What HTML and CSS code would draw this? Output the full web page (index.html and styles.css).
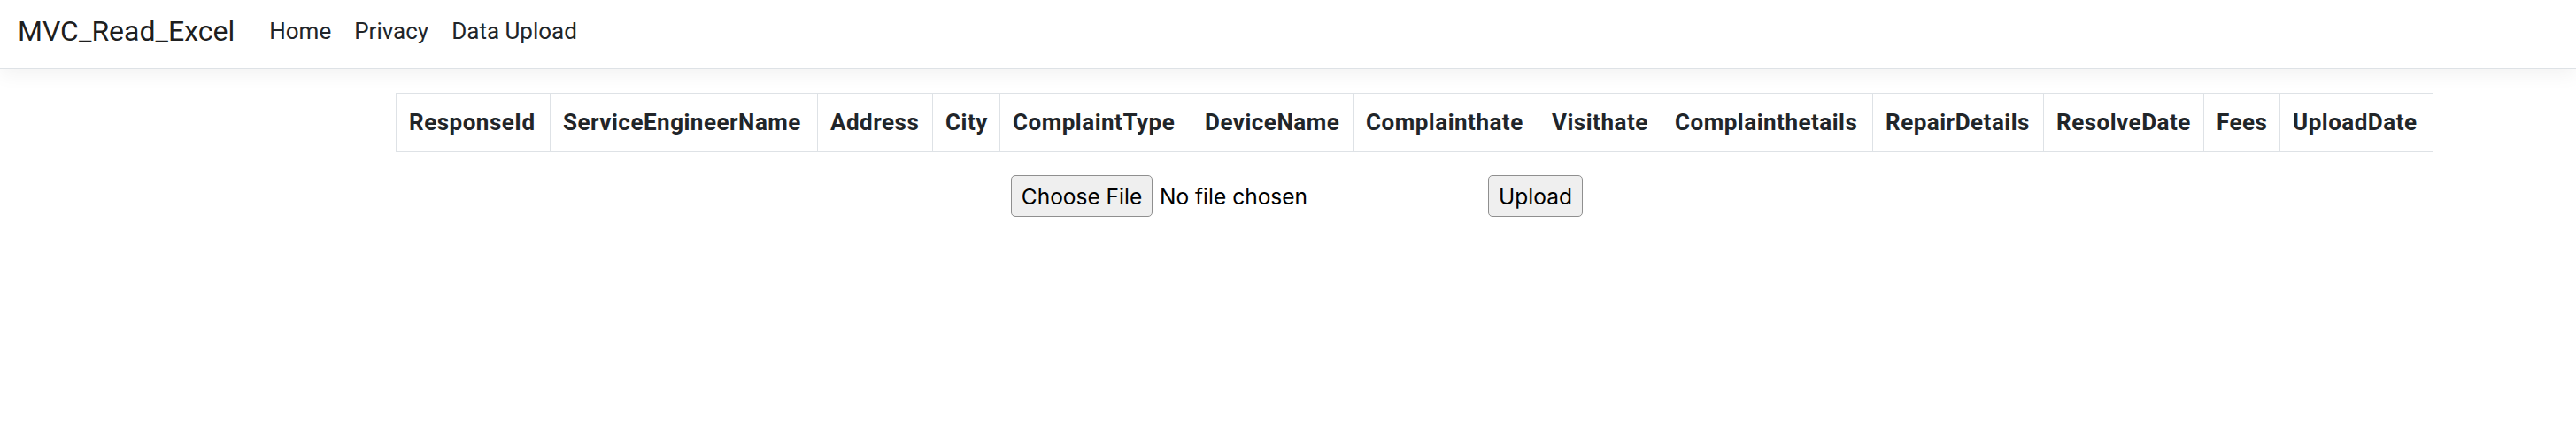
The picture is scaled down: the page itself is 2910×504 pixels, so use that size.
FILE: index.html
```html
<!DOCTYPE html>
<html lang="en">
<head>
<meta charset="utf-8">
<title>MVC_Read_Excel</title>
<link rel="stylesheet" href="styles.css">
</head>
<body>
<header class="navbar">
  <a class="brand" href="#">MVC_Read_Excel</a>
  <nav class="nav">
    <a class="nav-link" href="#">Home</a>
    <a class="nav-link" href="#">Privacy</a>
    <a class="nav-link" href="#">Data Upload</a>
  </nav>
</header>
<main class="container">
  <table class="grid">
    <colgroup>
      <col class="c1"><col class="c2"><col class="c3"><col class="c4"><col class="c5"><col class="c6"><col class="c7"><col class="c8"><col class="c9"><col class="c10"><col class="c11"><col class="c12"><col class="c13">
    </colgroup>
    <thead>
      <tr>
        <th>ResponseId</th>
        <th>ServiceEngineerName</th>
        <th>Address</th>
        <th>City</th>
        <th>ComplaintType</th>
        <th>DeviceName</th>
        <th>Complainthate</th>
        <th>Visithate</th>
        <th>Complainthetails</th>
        <th>RepairDetails</th>
        <th>ResolveDate</th>
        <th>Fees</th>
        <th>UploadDate</th>
      </tr>
    </thead>
  </table>
  <form class="upload-row">
    <div class="file-input">
      <button type="button" class="btn">Choose File</button>
      <span class="file-name">No file chosen</span>
    </div>
    <button type="button" class="btn btn-upload">Upload</button>
  </form>
</main>
</body>
</html>
```

FILE: styles.css
```css
html, body {
  margin: 0;
  padding: 0;
  background: #fff;
}
body {
  font-family: Roboto, "Noto Sans", sans-serif;
  color: #212529;
  width: 2910px;
  overflow: hidden;
}
.navbar {
  display: flex;
  align-items: center;
  height: 70px;
  padding: 0 20px 7px;
  border-bottom: 1px solid #dee2e6;
  box-shadow: 0 7px 20px rgba(0, 0, 0, 0.05);
  box-sizing: content-box;
}
.brand {
  font-size: 32px;
  color: rgba(0, 0, 0, 0.9);
  text-decoration: none;
  margin-right: 26px;
  line-height: 1;
}
.nav {
  display: flex;
}
.nav-link {
  font-size: 26px;
  color: #212529;
  text-decoration: none;
  padding: 0 13px;
  line-height: 1;
}
.container {
  width: 2016px;
  margin: 27px auto 0;
}
.grid {
  border-collapse: collapse;
  table-layout: fixed;
  width: 2301px;
  margin-bottom: 26px;
}
.grid th {
  border: 1px solid #dee2e6;
  padding: 13px 14px;
  font-size: 26px;
  line-height: 39px;
  font-weight: 700;
  letter-spacing: 0.5px;
  text-align: left;
  white-space: nowrap;
  overflow: hidden;
}
.c1 { width: 174px; }
.c2 { width: 302px; }
.c3 { width: 130px; }
.c4 { width: 76px; }
.c5 { width: 217px; }
.c6 { width: 182px; }
.c7 { width: 210px; }
.c8 { width: 139px; }
.c9 { width: 238px; }
.c10 { width: 193px; }
.c11 { width: 181px; }
.c12 { width: 86px; }
.c13 { width: 173px; }
.upload-row {
  display: flex;
  justify-content: center;
  align-items: center;
  padding-left: 20px;
  gap: 7px;
}
.file-input {
  display: flex;
  align-items: center;
  width: 532px;
}
.btn {
  height: 47px;
  box-sizing: border-box;
  font-family: Inter, "Noto Sans", sans-serif;
  font-size: 24.5px;
  color: #000;
  background: #efefef;
  border: 1px solid #8f8f8f;
  border-radius: 5px;
  padding: 0 10px;
}
.file-input .btn {
  width: 160px;
}
.btn-upload {
  width: 107px;
}
.file-name {
  font-family: Inter, "Noto Sans", sans-serif;
  font-size: 24.5px;
  color: #000;
  margin-left: 8px;
}
```
